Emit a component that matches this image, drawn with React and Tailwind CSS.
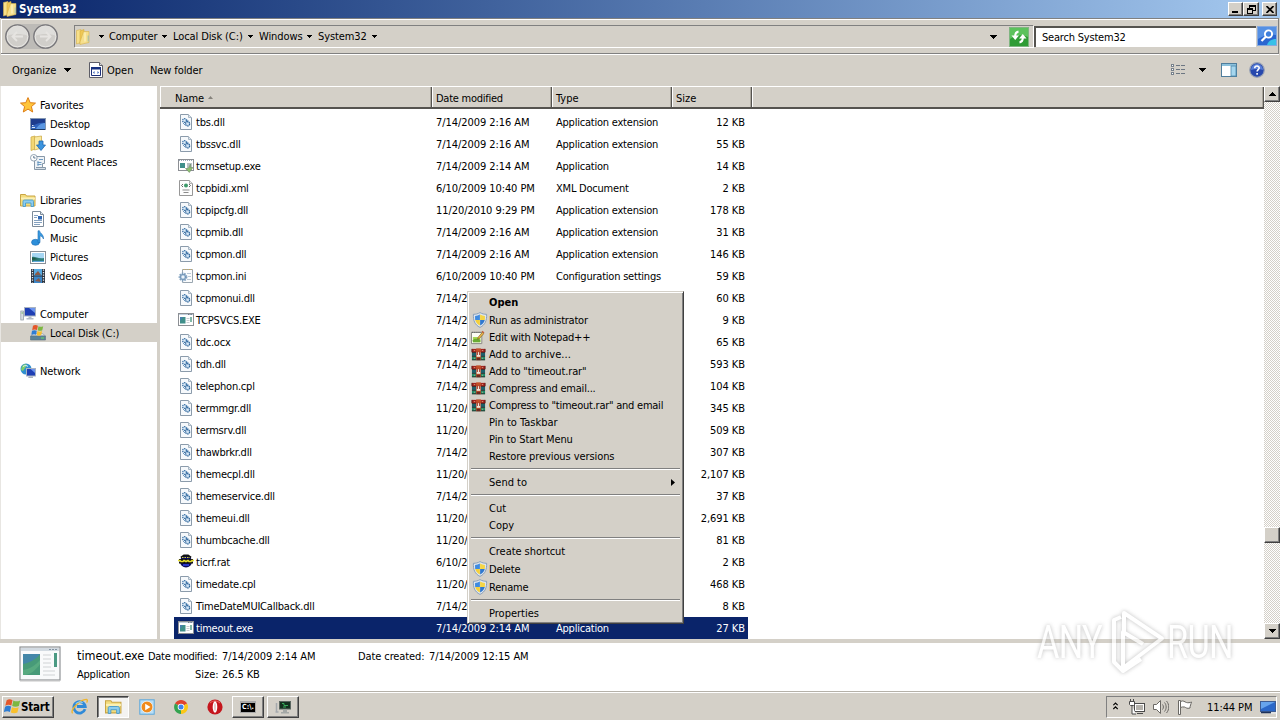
import React from 'react';

const files = [
  ['dll', 'tbs.dll', '7/14/2009 2:16 AM', 'Application extension', '12 KB'],
  ['dll', 'tbssvc.dll', '7/14/2009 2:16 AM', 'Application extension', '55 KB'],
  ['setup', 'tcmsetup.exe', '7/14/2009 2:14 AM', 'Application', '14 KB'],
  ['xml', 'tcpbidi.xml', '6/10/2009 10:40 PM', 'XML Document', '2 KB'],
  ['dll', 'tcpipcfg.dll', '11/20/2010 9:29 PM', 'Application extension', '178 KB'],
  ['dll', 'tcpmib.dll', '7/14/2009 2:16 AM', 'Application extension', '31 KB'],
  ['dll', 'tcpmon.dll', '7/14/2009 2:16 AM', 'Application extension', '146 KB'],
  ['ini', 'tcpmon.ini', '6/10/2009 10:40 PM', 'Configuration settings', '59 KB'],
  ['dll', 'tcpmonui.dll', '7/14/2', '', '60 KB'],
  ['exe', 'TCPSVCS.EXE', '7/14/2', '', '9 KB'],
  ['dll', 'tdc.ocx', '7/14/2', '', '65 KB'],
  ['dll', 'tdh.dll', '7/14/2', '', '593 KB'],
  ['dll', 'telephon.cpl', '7/14/2', '', '104 KB'],
  ['dll', 'termmgr.dll', '11/20/', '', '345 KB'],
  ['dll', 'termsrv.dll', '11/20/', '', '509 KB'],
  ['dll', 'thawbrkr.dll', '7/14/2', '', '307 KB'],
  ['dll', 'themecpl.dll', '11/20/', '', '2,107 KB'],
  ['dll', 'themeservice.dll', '7/14/2', '', '37 KB'],
  ['dll', 'themeui.dll', '11/20/', '', '2,691 KB'],
  ['dll', 'thumbcache.dll', '11/20/', '', '81 KB'],
  ['rat', 'ticrf.rat', '6/10/2', '', '2 KB'],
  ['dll', 'timedate.cpl', '11/20/', '', '468 KB'],
  ['dll', 'TimeDateMUICallback.dll', '7/14/2', '', '8 KB'],
  ['exe', 'timeout.exe', '7/14/2009 2:14 AM', 'Application', '27 KB'],
];

const places = [
  ['star', 'Favorites', 0],
  ['desktop', 'Desktop', 1],
  ['downloads', 'Downloads', 1],
  ['recent', 'Recent Places', 1],
  null,
  ['library', 'Libraries', 0],
  ['doc', 'Documents', 1],
  ['music', 'Music', 1],
  ['picture', 'Pictures', 1],
  ['video', 'Videos', 1],
  null,
  ['computer', 'Computer', 0],
  ['disk', 'Local Disk (C:)', 1, true],
  null,
  ['network', 'Network', 0],
];

const menu = [
  ['Open', null, 'h-[17px] font-bold'],
  ['Run as administrator', 'shield', 'h-[18px] tracking-[-0.23px]'],
  ['Edit with Notepad++', 'notepad', 'h-[17px] tracking-[-0.2px]'],
  ['Add to archive...', 'rar', 'h-[17px] tracking-[0.05px]'],
  ['Add to "timeout.rar"', 'rar', 'h-[17px] tracking-[-0.15px]'],
  ['Compress and email...', 'rar', 'h-[17px] tracking-[-0.2px]'],
  ['Compress to "timeout.rar" and email', 'rar', 'h-[17px] tracking-[-0.24px]'],
  ['Pin to Taskbar', null, 'h-[17px]'],
  ['Pin to Start Menu', null, 'h-[17px] tracking-[-0.1px]'],
  ['Restore previous versions', null, 'h-[17px] tracking-[-0.08px]'],
  null,
  ['Send to', null, 'h-[17px]', true],
  null,
  ['Cut', null, 'h-[17px]'],
  ['Copy', null, 'h-[17px]'],
  null,
  ['Create shortcut', null, 'h-[17px] tracking-[-0.06px]'],
  ['Delete', 'shield', 'h-[18px] tracking-[-0.2px]'],
  ['Rename', 'shield', 'h-[18px] tracking-[-0.2px]'],
  null,
  ['Properties', null, 'h-[17px]'],
];

const glyphs = {
  dll: (
    <>
      <path d="M2.5.5h8l3 3v12h-11z" fill="#f6f9fc" stroke="#8b9bab" />
      <path d="M10.5.5v3h3" fill="#dce6ee" stroke="#a9b7c4" />
      <circle cx="6.5" cy="6.5" r="1.9" fill="#dcebf7" stroke="#3e74a8" strokeWidth="1.3" strokeDasharray="1.3 .6" />
      <circle cx="9.6" cy="9.8" r="2.1" fill="#cfe2f3" stroke="#2f669c" strokeWidth="1.3" strokeDasharray="1.4 .6" />
      <path d="M8.5 5.5l2.5 2M5 9l2 2" stroke="#6c97bf" />
    </>
  ),
  exe: (
    <>
      <rect x=".5" y="1.5" width="15" height="12" fill="#fff" stroke="#8c8f94" />
      <path d="M1 2.5h14" stroke="#c3d0dd" />
      <path d="M10 2.5h4" stroke="#6b7787" strokeDasharray="1 .6" />
      <path d="M2 5h5.500v6.500H2z" fill="#3f8f8a" />
      <path d="M2 5h3L2 9z" fill="#4a7fb0" />
      <path d="M8.5 6.5h3M8.5 8.5h3M8.5 10.5h3" stroke="#c9cdd2" />
      <path d="M13 5v5" stroke="#4d9a83" strokeWidth="1.4" />
    </>
  ),
  setup: (
    <>
      <rect x=".5" y="1.5" width="15" height="11" fill="#fff" stroke="#8c8f94" />
      <path d="M1 2.5h14" stroke="#9aa9b8" strokeDasharray="1 1" />
      <path d="M2 5h5v5H2z" fill="#3f8f8a" />
      <path d="M9 5h5v5H9z" fill="#b9c3c6" />
      <path d="M12.5 6v3.5H15l-3.7 5-3.8-4h2.5c1-1 1.500-2.500 2.500-4.500z" fill="#8cbf6e" stroke="#6f8a6a" strokeWidth=".6" />
    </>
  ),
  xml: (
    <>
      <path d="M1.500.5h10l3 3v12h-13z" fill="#fdfdfd" stroke="#979797" />
      <path d="M11.500.5v3h3" fill="#e8e8e8" stroke="#b0b0b0" />
      <circle cx="8" cy="5.500" r="2" fill="#3c9a6a" />
      <path d="M5 4L3.500 5.500 5 7M11 4l1.500 1.500L11 7" fill="none" stroke="#555" strokeWidth=".9" />
      <path d="M4.500 10h7M5.500 12.500h5" stroke="#8b8b8b" />
    </>
  ),
  ini: (
    <>
      <path d="M4.500 1.500h10v13h-10z" fill="#fbfcfd" stroke="#9aa6b0" />
      <path d="M5 1.500h10" stroke="#c8a860" strokeDasharray="1 1" />
      <path d="M9 5.500h4M10 8.500h3M9 11.500h4" stroke="#b9c8d6" />
      <circle cx="5" cy="9" r="3.400" fill="#c5d9ea" stroke="#7f9fbe" strokeWidth="2" strokeDasharray="1.500 .9" />
      <circle cx="5" cy="9" r="2.600" fill="#b9d0e5" stroke="#6488ab" strokeWidth=".8" />
      <circle cx="5" cy="9" r="1" fill="#fff" />
    </>
  ),
  rat: (
    <>
      <circle cx="8" cy="7.500" r="6" fill="#0b0d5c" />
      <path d="M3 3.500l3-2 4 0 3 2" fill="none" stroke="#111" strokeWidth="2" />
      <path d="M1 6h14M1 8.500h14" stroke="#111" strokeWidth="2" />
      <path d="M0 6.500h2l1 1h2l1-1 2 1 2-1 1 1h2l1-1h2" fill="none" stroke="#e7e02b" strokeWidth="1.600" />
      <path d="M4 3.500h8" stroke="#d9d23a" strokeDasharray="1.500 1" />
      <path d="M5 11h6" stroke="#2b38c8" strokeWidth="2" />
    </>
  ),
  folder: (
    <>
      <path d="M1.500 1.500L6 .5v13l-4.500 1.500z" fill="#f7e08a" stroke="#d6b14b" strokeWidth=".6" />
      <path d="M5 2l4-1.500v12L5 15z" fill="#efc855" stroke="#d8ae3f" strokeWidth=".6" />
      <path d="M8.500 2.500h5.500v11L5 15.500V13z" fill="#f6df8c" stroke="#d6b14b" strokeWidth=".6" />
      <path d="M10 3.500v9" stroke="#fff6cf" />
      <path d="M13.200 6.500v6" stroke="#5fa7d8" strokeWidth=".6" />
    </>
  ),
  star: (
    <path d="M8 .6l2.200 5.100 5.300.4-4.100 3.500 1.300 5.400L8 12.100 3.300 15l1.300-5.400L.5 6.100l5.300-.4z" fill="#ffc53a" stroke="#dd7d14" strokeWidth="1" />
  ),
  desktop: (
    <>
      <rect x=".5" y="2.500" width="15" height="11" fill="#2f62bb" stroke="#8598b3" />
      <path d="M1 3h14v4C10 6 5 8 1 11z" fill="#1d3c8d" />
      <path d="M6 13c2-4 6-6 9-6v6z" fill="#5b97e2" />
      <path d="M1 13.500h14" stroke="#1f3c68" />
      <path d="M2 9.500h1.500M2 11.500h3" stroke="#d7e5f5" />
    </>
  ),
  downloads: (
    <>
      <path d="M1 2l4-1v13l-4 1.500z" fill="#f3d774" stroke="#cfae4d" strokeWidth=".8" />
      <path d="M4.500 2l7-1v12l-7 2z" fill="#fae99f" stroke="#cfae4d" strokeWidth=".8" />
      <path d="M9 6h4v4h2.500L11 15.500 6.500 10H9z" fill="#3b94df" stroke="#2168ae" strokeWidth=".8" />
    </>
  ),
  recent: (
    <>
      <path d="M4.500 2.500h10v7h-2v6h-8z" fill="#eef2f6" stroke="#8798a8" />
      <path d="M6 13.500h9.500v2H5" fill="#d5dee6" stroke="#8798a8" />
      <circle cx="3.800" cy="3.800" r="3.300" fill="#fff" stroke="#93a3b2" />
      <path d="M3.800 2v2h1.700" fill="none" stroke="#4b6882" strokeWidth=".9" />
      <path d="M7.500 8.500h4M7.500 10.500h4M9 5.500h4" stroke="#6d9bc3" />
      <path d="M8 7v5" stroke="#6d9bc3" />
    </>
  ),
  library: (
    <>
      <path d="M.5 2.500h5l1 1.500h8.500v10H.5z" fill="#f3dc7c" stroke="#c9a544" />
      <path d="M1 5.500h14v2H1z" fill="#fbf0b5" />
      <path d="M3 14.500V9.500c0-1 .5-1.500 1.500-1.500h7.500c1 0 1.500.5 1.500 1.500v5H11V11H5.500v3.500z" fill="#8ccdf0" stroke="#4b9bc9" strokeWidth=".9" />
    </>
  ),
  doc: (
    <>
      <path d="M2.500.5h8l3 3v12h-11z" fill="#fff" stroke="#7d8b99" />
      <path d="M10.500.5v3h3" fill="#dde6ee" stroke="#7d8b99" />
      <path d="M4 4.500h4M4 6.500h3M4 9.500h8M4 11.500h8M4 13.500h6" stroke="#86a2c0" />
      <path d="M8 5h4v3.500H8z" fill="#2f67b3" />
    </>
  ),
  music: (
    <>
      <ellipse cx="5.500" cy="12.300" rx="4" ry="3" fill="#2d8fda" stroke="#1c6cb4" strokeWidth=".6" />
      <path d="M8 12.500V.8h1.500c.3 2.700 4.500 3.500 4 8.200-.8-2-2-3-3.500-3.200v6.700z" fill="#3a9ce2" stroke="#1c6cb4" strokeWidth=".6" />
    </>
  ),
  picture: (
    <>
      <rect x=".5" y="2.500" width="15" height="12" fill="#fff" stroke="#8a9098" />
      <path d="M2 4h12v9H2z" fill="#a6d6f3" />
      <path d="M2 8c3-1 6 2 12 1v4H2z" fill="#2e7f7c" />
      <path d="M2 8.500c2-.5 4 1 7 1.500l-7 1z" fill="#215b49" />
      <path d="M4 12h10v1H2z" fill="#62a9dd" />
    </>
  ),
  video: (
    <>
      <path d="M1 1h14v14H1z" fill="#2c3440" />
      <path d="M4 1h8v6.500H4z" fill="#57a9e0" />
      <path d="M4 8.500h8V15H4z" fill="#3b87c9" />
      <path d="M5 6l3-3 3 4H5zM5 13l4-3 2 4z" fill="#8a5a48" />
      <path d="M2.500 1.500v13M13.500 1.500v13" stroke="#e9edf1" strokeWidth="1.300" strokeDasharray="1.300 1.200" />
    </>
  ),
  computer: (
    <>
      <rect x=".8" y="5" width="2.800" height="9" fill="#d7dce2" stroke="#8c96a0" strokeWidth=".7" />
      <path d="M1.500 7h1.500" stroke="#6cb95c" />
      <rect x="4.500" y="1.500" width="11" height="8.500" fill="#1f3fb4" stroke="#a9b3c2" />
      <path d="M9 2h6v5z" fill="#6b94ee" />
      <path d="M8.500 10.500h3V12h2v1.500h-7V12h2z" fill="#b4bcc8" />
    </>
  ),
  disk: (
    <>
      <path d="M1 11l3-2.500h8.500L15.500 11z" fill="#d8dee5" stroke="#8b97a3" strokeWidth=".6" />
      <path d="M.5 11h15v4H.5z" fill="#5a8296" stroke="#57707f" strokeWidth=".6" />
      <path d="M11 13h3" stroke="#63d16c" strokeWidth="1.200" />
      <path d="M3 .8C4.500-.2 6.500 0 7.900.8L7 5C5.600 4.200 4 4.200 2.200 5z" fill="#e4572a" />
      <path d="M8.500 1.200c1.500.8 3.200.8 4.700 0L12.300 5.300c-1.500.8-3.100.7-4.600 0z" fill="#7cb740" />
      <path d="M2 5.800C3.700 5 5.300 5.100 6.800 5.800L6 9.800c-1.400-.8-3-.7-4.700 0z" fill="#2f7dd2" />
      <path d="M7.500 6.100c1.400.8 3 .8 4.600 0L11.200 10.100c-1.500.8-3.100.8-4.600 0z" fill="#f9c02c" />
    </>
  ),
  network: (
    <>
      <circle cx="6" cy="6" r="5.500" fill="#2f8fd0" />
      <path d="M2 3c2-2 4-2 5-1L5 5 3 8 1 7zM6 8l3-1v4z" fill="#7fcf6a" />
      <path d="M3 3.500C5 2 7 2.500 8 3.500" stroke="#d9f2ff" fill="none" />
      <rect x="6.500" y="5.500" width="9" height="7.500" fill="#1f3fb4" stroke="#a9b3c2" />
      <path d="M10.500 6h4.500v4z" fill="#6b94ee" />
      <path d="M9 13.500h4v1.500H8z" fill="#aab2be" />
    </>
  ),
  shield: (
    <>
      <path d="M8 .6c2 1.200 4.200 1.700 6.600 1.700.3 6.200-1.300 10.500-6.600 13.100C2.700 12.800 1.100 8.500 1.400 2.300 3.800 2.300 6 1.800 8 .6z" fill="#dfe6ee" stroke="#7f97b3" strokeWidth=".9" />
      <path d="M7.900 2.600V8H3.200c-.2-1.500-.2-2.600-.1-4 1.800-.1 3.300-.6 4.800-1.400z" fill="#3f8be0" />
      <path d="M8.100 2.600V8h4.700c.2-1.500.2-2.600.1-4-1.800-.1-3.300-.6-4.800-1.400z" fill="#f5d545" />
      <path d="M7.900 8H3.200c.7 2.700 2.200 4.400 4.700 5.600z" fill="#f5d03a" />
      <path d="M8.100 8h4.700c-.7 2.700-2.200 4.400-4.700 5.600z" fill="#2f78cf" />
    </>
  ),
  notepad: (
    <>
      <path d="M.5 2.500h11v12H.5z" fill="#fdfdf4" stroke="#85857d" />
      <path d="M1 2.500h10" stroke="#555" strokeDasharray="1 1" />
      <path d="M2 7.500h8v5.500H2z" fill="#a6d650" />
      <path d="M2 11c2-2.500 5-1.500 8-.5V13H2z" fill="#6bab34" />
      <path d="M12 2.500l1.500 1.500-4.500 5-2 .8.700-2.200z" fill="#eebb4a" stroke="#7a5a20" strokeWidth=".7" />
      <path d="M11.800 1.300l2 2" stroke="#c0603d" strokeWidth="1.500" />
    </>
  ),
  rar: (
    <>
      <path d="M1 2h14v4H1z" fill="#a3231f" />
      <path d="M1 6h14v4H1z" fill="#1d5f6a" />
      <path d="M1 10h14v4H1z" fill="#1b8a68" />
      <path d="M1 5.800h14M1 10h14M1 13.700h14" stroke="#2a1c1c" strokeWidth=".8" />
      <path d="M1 2v3.500M15 2v3.500" stroke="#5c1513" />
      <path d="M5.500 1.500h5v12.500h-5z" fill="#c2502a" />
      <path d="M6 5.500h4v5H6z" fill="#efe5d8" />
      <path d="M6.800 5v3.500M9.200 5v3.500" stroke="#9b2d20" strokeWidth="1" />
      <path d="M6 11.500h4V14H6z" fill="#6b2a20" />
      <path d="M3 3.800h1.500M11.500 3.800H13M3 12h1.500M11.500 12H13" stroke="#d9b98a" strokeWidth=".8" />
    </>
  ),
  openExe: (
    <>
      <path d="M1.500.5h10l3 3v12h-13z" fill="#fff" stroke="#5d5d66" />
      <path d="M11.500.5v3h3" fill="#ddd" stroke="#5d5d66" />
      <path d="M3.500 5.500h9v8h-9z" fill="#fff" stroke="#1c2f7a" />
      <path d="M3 5h10v2.500H3z" fill="#16307f" />
      <path d="M6.500 9L5 10.500 6.500 12zM9.500 9l1.500 1.500L9.500 12z" fill="#2b59b6" />
    </>
  ),
  windows: (
    <>
      <path d="M2.500 2C4.500.6 6.300 1 8 2L6.900 7C5.200 6 3.300 6 1.200 7.200z" fill="#e4572a" />
      <path d="M8.800 2.300c2 1.100 4.300 1.100 6.400 0L14 7.500c-2 1-4.300 1-6.300 0z" fill="#7cb740" />
      <path d="M1 8.200C3 7.100 4.900 7.200 6.700 8.100l-1.100 5C3.800 12.100 1.900 12.200-.2 13.300z" fill="#2f7dd2" />
      <path d="M7.500 8.600c2 1 4.300 1 6.300 0L12.600 13.700c-2 1-4.200 1-6.200 0z" fill="#f9c02c" />
    </>
  ),
  ie: (
    <>
      <path d="M13.200 10.500A5.400 5.400 0 1 1 13.400 8H5.500" fill="none" stroke="#2f8ad8" strokeWidth="2.600" />
      <path d="M1.500 14.500C-1 11.500 8 1.500 14.500 1.300c1.600.3.600 2.500.2 3" fill="none" stroke="#efb52c" strokeWidth="1.300" />
      <path d="M4.500 5.500c1.500-2 4.500-2.500 6.500-1" fill="none" stroke="#8fcdf5" />
    </>
  ),
  player: (
    <>
      <rect x=".8" y=".8" width="14.400" height="14.400" fill="#b9def7" stroke="#5ca7db" />
      <circle cx="8" cy="8" r="5.800" fill="#f08a1c" stroke="#fff" strokeWidth=".6" />
      <path d="M6.200 4.800L11.500 8l-5.300 3.200z" fill="#fff" />
    </>
  ),
  chrome: (
    <>
      <path d="M8 8L2 4.500A7 7 0 0 1 14.100 4.600z" fill="#e0432f" />
      <path d="M8 8L14.100 4.600A7 7 0 0 1 8 15z" fill="#fbc716" />
      <path d="M8 8v7A7 7 0 0 1 2 4.500z" fill="#34a350" />
      <circle cx="8" cy="8" r="3.300" fill="#fff" />
      <circle cx="8" cy="8" r="2.500" fill="#3f83ee" />
    </>
  ),
  opera: (
    <>
      <circle cx="8" cy="8" r="7.600" fill="#c5161d" />
      <path d="M3 4a7 7 0 0 1 10 0" stroke="#ea6a62" fill="none" />
      <ellipse cx="8" cy="8" rx="2.300" ry="5.700" fill="#fff" />
      <ellipse cx="8" cy="8" rx=".9" ry="4" fill="#e4c6c4" />
    </>
  ),
  monitor: (
    <>
      <path d="M1.500 4v9M.5 13h3" stroke="#a5a9ad" strokeWidth="1.500" />
      <rect x="4.500" y="2.500" width="11" height="7.500" fill="#14301f" stroke="#5a6660" />
      <path d="M7 4.500h2v2h4M8 8h3" fill="none" stroke="#39a85a" />
      <path d="M8 10.500h4v2.500h2v1.500H6v-1.500h2z" fill="#a4a8a6" />
    </>
  ),
  showDesktop: (
    <>
      <rect x=".5" y="2.500" width="15" height="10" fill="#2c68c8" stroke="#3f5d93" />
      <path d="M1 3h14L1 10z" fill="#67a4ec" />
      <path d="M1 13.500h10" stroke="#1c315c" strokeWidth="1.500" />
      <path d="M11 14h5" stroke="#eef3fa" />
    </>
  ),
};

function Icon({ name, size = 'size-4' }) {
  return <svg viewBox="0 0 16 16" className={`${size} shrink-0`}>{glyphs[name]}</svg>;
}

function Down({ className = '' }) {
  return <svg viewBox="0 0 7 4" className={`h-1 w-[7px] shrink-0 ${className}`} shapeRendering="crispEdges"><path d="M0 0h7L3.500 4z" /></svg>;
}

function SmallDown({ className = '' }) {
  return <svg viewBox="0 0 5 3" className={`h-[3px] w-[5px] shrink-0 ${className}`} shapeRendering="crispEdges"><path d="M0 0h5v1H4v1H3v1H2V2H1V1H0z" /></svg>;
}

const raised = 'bg-[#d4d0c8] border border-t-white border-l-white border-r-[#404040] border-b-[#404040] shadow-[inset_-1px_-1px_0_#808080]';

function TitleBar() {
  return (
    <div className="h-[18px] shrink-0 flex items-center pl-[2px] pr-[3px] bg-linear-to-r from-[#0a246a] to-[#a6caf0]">
      <Icon name="folder" />
      <span className="ml-[1px] mt-[2px] flex-1 text-white font-bold text-[11.5px]">System32</span>
      <div className={`w-[15px] h-[14px] flex items-end pl-[3px] pb-[2px] ${raised}`}><span className="w-[6px] h-[2px] bg-black" /></div>
      <div className={`w-[16px] h-[14px] mr-[3px] flex items-center justify-center ${raised}`}>
        <svg viewBox="0 0 9 9" className="size-[9px]" shapeRendering="crispEdges" fill="none" stroke="#000">
          <path d="M2.500 3V.5h6v5H6M2 1.500h7M.5 3.500h5v5h-5zM0 4.500h6" />
        </svg>
      </div>
      <div className={`w-[15px] h-[14px] flex items-center justify-center ${raised}`}>
        <svg viewBox="0 0 8 7" className="w-2 h-[7px]" stroke="#000" strokeWidth="1.700"><path d="M.5 0l7 7M7.500 0l-7 7" /></svg>
      </div>
    </div>
  );
}

function NavButton({ d }) {
  return (
    <svg viewBox="0 0 25 25" className="size-[25px]">
      <circle cx="12.500" cy="12.500" r="11.700" fill="#c9c7c3" stroke="#77767a" strokeWidth="1.300" />
      <circle cx="12.500" cy="12.500" r="10.300" fill="#d0ceca" stroke="#e9e8e5" />
      <path d="M3 11.500a9.500 9.500 0 0 1 19 0c-5-2-14-2-19 0z" fill="#dfdedb" />
      <path d={d} fill="none" stroke="#e6e4e1" strokeWidth="1.800" />
    </svg>
  );
}

function Crumb({ label, width }) {
  return (
    <div className={`${width} flex items-center justify-between pr-[6px]`}>
      <span className="tracking-[-0.1px]">{label}</span>
      <SmallDown />
    </div>
  );
}

function AddressBar() {
  return (
    <div className="h-[36px] shrink-0 mx-px flex items-center border-t border-b border-[#808080] shadow-[inset_0_1px_0_#fff,inset_1px_0_0_#fff,0_1px_0_#fff] border-r">
      <div className="flex gap-[3px] ml-[4px] rounded-full bg-[#bdbbb7]">
        <NavButton d="M18 12.500H8M12 8l-4.500 4.500L12 17" />
        <NavButton d="M7 12.500h10M13 8l4.500 4.500L13 17" />
      </div>
      <div className="ml-[16px] w-[959px] h-[22px] flex items-center border-t border-l border-[#808080] shadow-[1px_1px_0_#fff]">
        <Icon name="folder" />
        <SmallDown className="ml-[8px] mr-[5px]" />
        <Crumb label="Computer" width="w-[64px]" />
        <Crumb label="Local Disk (C:)" width="w-[86px]" />
        <Crumb label="Windows" width="w-[59px]" />
        <Crumb label="System32" width="w-[65px]" />
        <div className="flex-1" />
        <Down className="mr-[12px]" />
        <svg viewBox="0 0 20 20" className="size-5 mr-[4px]">
          <rect x=".5" y=".5" width="19" height="19" fill="#2f9c35" stroke="#7fb581" />
          <path d="M1 1h18v9C12 7 7 8 1 12z" fill="#5cc25c" />
          <path d="M2.500 8.500h7.500L6.200 13zM10 11.500h7.500L13.800 7z" fill="#fff" />
          <path d="M6.200 9c0-2.500 1-4 3.300-4.500M13.800 11c0 2.500-1 4-3.300 4.500" stroke="#fff" strokeWidth="2" fill="none" />
        </svg>
      </div>
      <div className="ml-px w-[222px] h-[21px] pl-[6px] flex items-center bg-white border-t-2 border-l-2 border-[#55534f] tracking-[-0.2px]">Search System32</div>
      <svg viewBox="0 0 20 20" className="size-5 ml-[1px]">
        <rect x=".5" y=".5" width="19" height="19" fill="#2a66d0" stroke="#87a9dd" />
        <path d="M1 1h18v8c-7-1-12 0-18 4z" fill="#5590e4" />
        <path d="M10 19c1-4 5-6 9-6v6z" fill="#37c0e8" />
        <circle cx="11.500" cy="8" r="3.600" fill="#3f7fdc" stroke="#fff" strokeWidth="1.900" />
        <path d="M8.800 10.700L4.500 15" stroke="#fff" strokeWidth="2.200" />
      </svg>
    </div>
  );
}

function CommandBar() {
  return (
    <div className="h-[32px] shrink-0 flex items-center pl-[12px] pr-[15px]">
      <span className="w-[52px]">Organize</span>
      <Down />
      <span className="w-[17px]" />
      <Icon name="openExe" />
      <span className="ml-[3px] w-[43px]">Open</span>
      <span className="flex-1 tracking-[-0.1px]">New folder</span>
      <svg viewBox="0 0 16 14" className="w-4 h-[14px] mr-[13px]" fill="none" shapeRendering="crispEdges">
        <path d="M1.500 1.500h2v2h-2zM1.500 5.500h2v2h-2zM1.500 9.500h2v2h-2z" fill="#fff" stroke="#77818c" />
        <path d="M6 2.500h4M6 6.500h4M6 10.500h4M11 2.500h4M11 6.500h4M11 10.500h4" stroke="#6c7682" />
      </svg>
      <Down className="mr-[15px]" />
      <svg viewBox="0 0 16 14" className="w-4 h-[14px] mr-[12px]">
        <rect x=".5" y=".5" width="15" height="13" fill="#fff" stroke="#4f7d9c" />
        <path d="M1 1h14v2H1z" fill="#8bc1dc" />
        <path d="M10 3h5v10h-5z" fill="#a5d6ee" stroke="#4b88ab" strokeWidth=".8" />
      </svg>
      <svg viewBox="0 0 16 16" className="size-4">
        <circle cx="8" cy="8" r="7.300" fill="#2748ad" stroke="#9aa3b5" strokeWidth="1.200" />
        <path d="M2 8a6 6 0 0 1 12 0c-4-1.500-8-1.500-12 0z" fill="#5a7fd8" />
        <path d="M5.700 6.200c.1-3 4.600-2.800 4.500-.2-.1 1.600-2.100 1.600-2.100 3.500M8.100 11v1.700" fill="none" stroke="#fff" strokeWidth="1.600" />
      </svg>
    </div>
  );
}

function Sidebar() {
  return (
    <div className="w-[157px] shrink-0 bg-white pt-[9px] border-l border-[#e8e6e2]">
      {places.map((p, i) => p ? (
        <div key={i} className={`h-[19px] flex items-center gap-[4px] ${p[2] ? 'pl-[29px]' : 'pl-[19px]'} ${p[3] ? 'bg-[#d4d0c8]' : ''}`}>
          <Icon name={p[0]} />
          <span className="mt-[2px] tracking-[-0.12px]">{p[1]}</span>
        </div>
      ) : <div key={i} className="h-[19px]" />)}
    </div>
  );
}

function FileList() {
  const head = 'h-full flex items-center pt-[3px] border-r border-[#55534f] shadow-[inset_1px_0_0_#fff,inset_-1px_0_0_#aaa69d]';
  return (
    <div className="flex-1 bg-white flex flex-col">
      <div className="h-[23px] shrink-0 flex bg-[#d4d0c8] border-t border-t-white border-b-2 border-b-[#55534f]">
        <div className={`${head} w-[272px] pl-[15px]`}>
          Name
          <svg viewBox="0 0 5 3" className="w-[5px] h-[3px] ml-[4px] mb-[3px]"><path d="M0 3h5L2.500 0z" fill="#85827b" /></svg>
        </div>
        <div className={`${head} w-[120px] pl-[4px] tracking-[-0.25px]`}>Date modified</div>
        <div className={`${head} w-[120px] pl-[4px]`}>Type</div>
        <div className={`${head} w-[80px] pl-[4px]`}>Size</div>
        <div className={`${head} flex-1`} />
      </div>
      <div className="pt-[2px]">
        {files.map(([icon, name, date, type, size], i) => (
          <div key={name} className={`h-[22px] ml-[14px] w-[574px] flex items-center ${i === files.length - 1 ? 'bg-[#0a246a] text-white' : ''}`}>
            <div className="w-[262px] flex items-center gap-[2px] pl-[4px]">
              <Icon name={icon} />
              <span className="tracking-[-0.22px]">{name}</span>
            </div>
            <span className="w-[120px] tracking-[-0.07px]">{date}</span>
            <span className="w-[110px] tracking-[-0.22px]">{type}</span>
            <span className="flex-1 text-right pr-[3px] tracking-[-0.05px]">{size}</span>
          </div>
        ))}
      </div>
    </div>
  );
}

function ScrollBar() {
  return (
    <div className="w-4 shrink-0 flex flex-col bg-[#d4d0c8] bg-[repeating-conic-gradient(#ffffff_0_25%,#d4d0c8_0_50%)] bg-[length:2px_2px]">
      <div className={`size-4 flex items-center justify-center ${raised}`}><Down className="rotate-180" /></div>
      <div className="h-[425px]" />
      <div className={`size-4 ${raised}`} />
      <div className="flex-1" />
      <div className={`size-4 flex items-center justify-center ${raised}`}><Down /></div>
    </div>
  );
}

function ContextMenu() {
  return (
    <div className="absolute left-[467px] top-[291px] w-[217px] h-[333px] p-[2px] bg-[#d4d0c8] border border-t-[#d4d0c8] border-l-[#d4d0c8] border-r-[#404040] border-b-[#404040] shadow-[inset_1px_1px_0_#fff,inset_-1px_-1px_0_#808080]">
      {menu.map((m, i) => m ? (
        <div key={i} className={`${m[2]} flex items-center`}>
          <span className="w-[19px] flex justify-center">{m[1] && <Icon name={m[1]} size={m[1] === 'shield' ? 'size-4' : 'size-[15px] mr-[2px]'} />}</span>
          <span className="flex-1 whitespace-nowrap">{m[0]}</span>
          {m[3] && <svg viewBox="0 0 4 7" className="w-1 h-[7px] mr-[6px]"><path d="M0 0v7l4-3.500z" /></svg>}
        </div>
      ) : (
        <div key={i} className="h-[9px] pt-[3px] px-px"><div className="h-[2px] bg-[#808080] border-b border-white" /></div>
      ))}
    </div>
  );
}

function Details() {
  return (
    <div className="h-[49px] shrink-0 flex bg-white pl-[19px] pt-[3px]">
      <svg viewBox="0 0 42 36" className="w-[42px] h-9">
        <rect x="1" y="1" width="40" height="33" fill="#f9fafb" stroke="#8f9396" strokeWidth="1.200" />
        <path d="M1 35h40" stroke="#c6c6c6" />
        <path d="M2 3.500h38" stroke="#d3dbe2" strokeWidth="3" />
        <path d="M30 3.500h8" stroke="#8494a3" strokeDasharray="2 1" />
        <path d="M4 8h17v21H4z" fill="#479a78" />
        <path d="M4 8h17C18 13 10 17 4 18z" fill="#4386a8" />
        <path d="M4 24c7-1 13-5 17-10v4C17 24 12 28 6 29H4z" fill="#58aa80" />
        <path d="M24 9h8M24 13h8M24 17h8M24 21h8M24 25h12M24 29h12" stroke="#d0d3d5" />
        <path d="M35 7h3v14h-3z" fill="#4b9a83" />
      </svg>
      <div className="ml-[16px] pt-[1px]">
        <div className="h-[18px] flex items-center">
          <span className="w-[71px] text-[12.5px]">timeout.exe</span>
          <span className="w-[74px] tracking-[-0.3px]">Date modified:</span>
          <span className="w-[136px] tracking-[-0.07px]">7/14/2009 2:14 AM</span>
          <span className="w-[71px] tracking-[-0.1px]">Date created:</span>
          <span className="tracking-[-0.07px]">7/14/2009 12:15 AM</span>
        </div>
        <div className="h-[18px] flex items-center">
          <span className="w-[118px] tracking-[-0.22px]">Application</span>
          <span className="w-[27px]">Size:</span>
          <span className="tracking-[-0.1px]">26.5 KB</span>
        </div>
      </div>
    </div>
  );
}

function Taskbar() {
  return (
    <div className="flex-1 flex items-center bg-[#d4d0c8] border-t border-white shadow-[0_-1px_0_#b5b1a9] pl-[2px] pr-[3px]">
      <div className={`w-[52px] h-[22px] flex items-center pl-[1px] font-bold text-[11.5px] tracking-[-0.2px] ${raised}`}>
        <Icon name="windows" size="size-[17px]" />
        <span className="mt-[2px]">Start</span>
      </div>
      <div className="ml-[17px] mr-[9px]"><Icon name="ie" size="size-[17px]" /></div>
      <div className="w-[32px] h-[22px] flex items-center justify-center bg-[#f4f3f1] border border-t-[#404040] border-l-[#404040] border-r-white border-b-white shadow-[inset_1px_1px_0_#808080]">
        <Icon name="library" size="size-[17px]" />
      </div>
      <div className="ml-[10px] mr-[18px]"><Icon name="player" /></div>
      <Icon name="chrome" />
      <div className="ml-[18px] mr-[9px]"><Icon name="opera" /></div>
      <div className={`w-[32px] h-[22px] mr-[3px] flex items-center justify-center ${raised}`}>
        <span className="w-[16px] h-[12px] bg-black text-white text-[7px] leading-[9px] font-bold text-center border border-t-2 border-[#a9a9a9]">C:\.</span>
      </div>
      <div className={`w-[32px] h-[22px] flex items-center justify-center ${raised}`}><Icon name="monitor" /></div>
      <div className="flex-1" />
      <div className="h-[22px] w-[171px] flex items-center pl-[6px] border border-t-[#808080] border-l-[#808080] border-r-white border-b-white">
        <svg viewBox="0 0 5 8" className="w-[5px] h-2 mb-[2px] mr-[11px]" fill="none" stroke="#000" strokeWidth="1.200"><path d="M.3 3.200l2.200-2.200 2.200 2.200M.3 7l2.200-2.200L4.700 7" /></svg>
        <svg viewBox="0 0 16 16" className="size-4 mr-[8px]">
          <rect x="5.500" y="4.500" width="10" height="8" fill="#b5b2ac" stroke="#4a4a4a" />
          <rect x="6.500" y="5.500" width="8" height="6" fill="none" stroke="#fff" />
          <path d="M8 14.500h6" stroke="#4a4a4a" />
          <path d="M.5 2.500h5v3l-1 1h-3l-1-1zM1.500 0v2M4.500 0v2M3 7v8h4" fill="#fff" stroke="#4a4a4a" />
        </svg>
        <svg viewBox="0 0 16 16" className="size-4 mr-[8px]" fill="none" stroke="#6a6864">
          <path d="M.5 5.500h3l4-4v13l-4-4h-3z" fill="#fff" />
          <path d="M9.500 5.500c1.200 1.500 1.200 3.500 0 5M11.500 3.500c2.200 2.500 2.200 6.500 0 9M13.500 2c3 3.500 3 8.500 0 12" />
        </svg>
        <svg viewBox="0 0 16 16" className="size-4 mr-[14px]" stroke="#6a6864">
          <path d="M1.500 1.500h2v14h-2z" fill="#fff" />
          <path d="M3.500 2.500c3-1.500 4 .5 6 1 1.500.5 3.500.2 5-.5-.5 2-1.500 4-1.500 6-3 1-4-.5-5.500-1-1.300-.3-2.700 0-4 .5z" fill="#fff" />
        </svg>
        <span className="w-[53px] mt-px whitespace-nowrap tracking-[-0.1px]">11:44 PM</span>
        <Icon name="showDesktop" />
      </div>
    </div>
  );
}

function Watermark() {
  return (
    <div className="absolute left-[1037px] top-[608px] w-[198px] h-[66px] flex items-center justify-between opacity-75 text-white drop-shadow-[0_0_2px_#aaa] pointer-events-none">
      <span className="inline-block w-[66px] text-[47px] leading-none tracking-[-1px] font-[Roboto] origin-left scale-x-[.73]">ANY</span>
      <svg viewBox="0 0 60 68" className="w-[60px] h-[68px] absolute left-[70px] top-0" fill="none" stroke="#fff" strokeWidth="4" strokeLinejoin="round">
        <path d="M17 24V5l38 25.500L16 60V24l20 12" />
        <path d="M14 9l-7 3v42l9 9L34 51" />
      </svg>
      <span className="inline-block w-[68px] text-[47px] leading-none tracking-[-1px] font-[Roboto] origin-left scale-x-[.73]">RUN</span>
    </div>
  );
}

export default function App() {
  return (
    <div className="relative w-[1280px] h-[720px] overflow-hidden flex flex-col bg-[#d4d0c8] text-black text-[11px] leading-none whitespace-nowrap font-['Tahoma','DejaVu_Sans_Condensed',sans-serif] select-none">
      <TitleBar />
      <AddressBar />
      <CommandBar />
      <div className="h-[553px] shrink-0 flex">
        <Sidebar />
        <div className="w-[3px] shrink-0" />
        <FileList />
        <ScrollBar />
      </div>
      <div className="h-[4px] shrink-0" />
      <Details />
      <Taskbar />
      <ContextMenu />
      <Watermark />
    </div>
  );
}
